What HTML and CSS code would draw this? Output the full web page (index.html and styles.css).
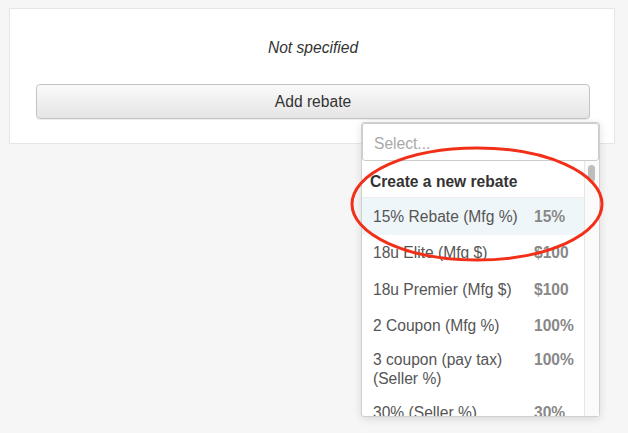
FILE: index.html
```html
<!DOCTYPE html>
<html lang="en">
<head>
    <meta charset="utf-8" />
    <title>Rebates</title>
    <link rel="stylesheet" href="styles.css">
</head>
<body>
    <div class="screen">
        <div class="panel">
            <p class="empty-note">Not specified</p>
            <button class="add-button" type="button">Add rebate</button>
        </div>

        <!-- rebate picker, opened under the button -->
        <div class="picker">
            <div class="search-box">Select...</div>
            <div class="picker-body">
                <ul class="picker-list">
                    <li class="picker-create">Create a new rebate</li>
                    <li class="picker-option is-active"><span>15% Rebate (Mfg %)</span><b>15%</b></li>
                    <li class="picker-option"><span>18u Elite (Mfg $)</span><b>$100</b></li>
                    <li class="picker-option"><span>18u Premier (Mfg $)</span><b>$100</b></li>
                    <li class="picker-option"><span>2 Coupon (Mfg %)</span><b>100%</b></li>
                    <li class="picker-option"><span>3 coupon (pay tax) (Seller %)</span><b>100%</b></li>
                    <li class="picker-option"><span>30% (Seller %)</span><b>30%</b></li>
                </ul>
                <div class="scroll-track"><div class="scroll-thumb"></div></div>
            </div>
        </div>

        <!-- hand drawn highlight round the first options -->
        <svg class="highlight" width="628" height="433" viewBox="0 0 628 433">
            <ellipse cx="477" cy="204" rx="125" ry="56" fill="none" stroke="#f2301a" stroke-width="3" />
        </svg>
    </div>
</body>
</html>
```

FILE: styles.css
```css
/* Page */
body {
    margin: 0;
    background-color: #f6f6f6;
    font-family: "Liberation Sans", Arial, sans-serif;
    font-size: 15.6px;
    color: #333;
}

.screen {
    position: relative;
    height: 433px;
    padding-top: 8px;
    box-sizing: border-box;
}

/* White card */
.panel {
    margin-left: 9px;
    width: 606px;
    height: 136px;
    box-sizing: border-box;
    padding: 0 24px 0 26px;
    background-color: #fff;
    border: 1px solid #e6e6e6;
}

.empty-note {
    margin: 0;
    padding-top: 30px;
    height: 45px;
    line-height: 18px;
    text-align: center;
    font-style: italic;
}

/* Add rebate button */
.add-button {
    display: block;
    width: 100%;
    height: 35px;
    border: 1px solid #c4c4c4;
    border-radius: 4px;
    background: linear-gradient(#fafafa, #e5e5e5);
    box-shadow: 0 1px 1px rgba(0, 0, 0, 0.08);
    font-family: inherit;
    font-size: 15.6px;
    color: #333;
}

/* Dropdown picker */
.picker {
    position: absolute;
    top: 122px;
    left: 361px;
    width: 239px;
    height: 295px;
    box-sizing: border-box;
    display: flex;
    flex-direction: column;
    background-color: #fff;
    border: 1px solid #cfcfcf;
    border-radius: 3px;
    box-shadow: 0 2px 8px rgba(0, 0, 0, 0.12);
}

.search-box {
    height: 38px;
    box-sizing: border-box;
    padding: 11px 11px 0;
    border: 1px solid #ccc;
    border-radius: 3px;
    color: #a9a9a9;
}

.picker-body {
    flex: 1;
    display: flex;
    min-height: 0;
}

.picker-list {
    flex: 1;
    margin: 0;
    padding: 0;
    list-style: none;
    overflow: hidden;
}

.picker-create {
    height: 37px;
    box-sizing: border-box;
    padding: 12px 0 0 8px;
    font-weight: bold;
    border-bottom: 1px solid #ededed;
}

/* Options */
.picker-option {
    display: grid;
    grid-template-columns: 161px 1fr;
    align-items: baseline;
    align-content: center;
    min-height: 36.5px;
    box-sizing: border-box;
    padding: 6px 0 6px 11px;
    line-height: 19px;
    color: #555;
}

.picker-option b {
    color: #888;
}

.picker-option.is-active {
    background-color: #eff6fa;
}

/* Scrollbar column */
.scroll-track {
    width: 14px;
    background-color: #fafafa;
    border-left: 1px solid #e6e6e6;
}

.scroll-thumb {
    width: 7px;
    height: 17px;
    margin: 4px 0 0 3px;
    border-radius: 4px;
    background-color: #bdbdbd;
}

/* Red ellipse drawn over the page */
.highlight {
    position: absolute;
    top: 0;
    left: 0;
    pointer-events: none;
}
```
